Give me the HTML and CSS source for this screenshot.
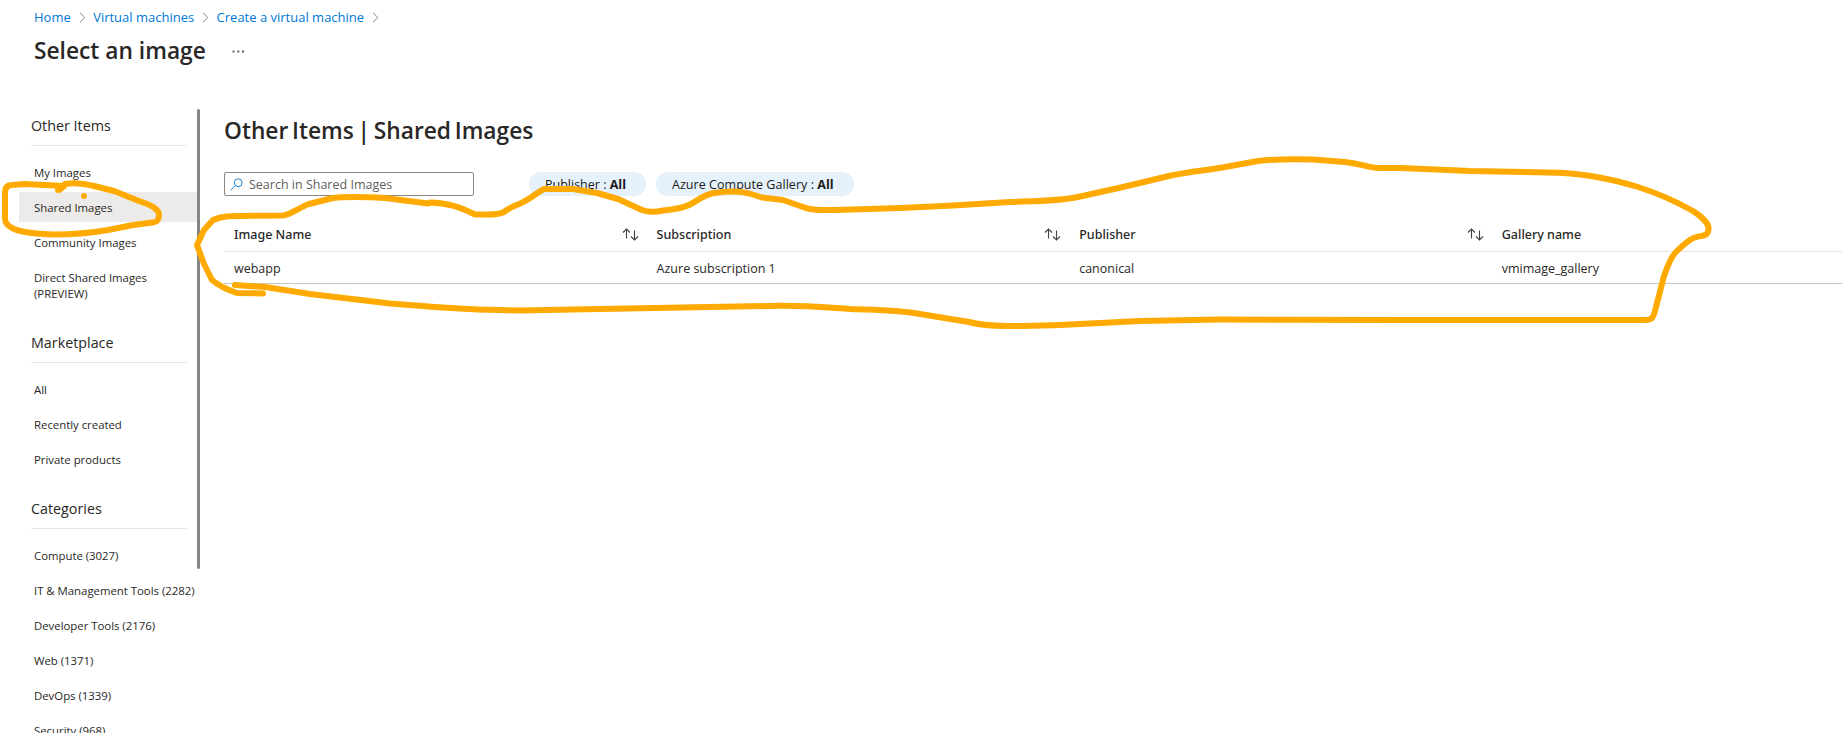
FILE: index.html
```html
<!DOCTYPE html>
<html lang="en">
<head>
<meta charset="utf-8">
<title>Select an image</title>
<link rel="stylesheet" href="styles.css">
</head>
<body>
<header class="top">
  <nav class="crumbs">
    <a class="crumb">Home</a>
    <svg class="chev" viewBox="0 0 7 11"><path d="M1 .8 5.8 5.5 1 10.2"/></svg>
    <a class="crumb">Virtual machines</a>
    <svg class="chev" viewBox="0 0 7 11"><path d="M1 .8 5.8 5.5 1 10.2"/></svg>
    <a class="crumb">Create a virtual machine</a>
    <svg class="chev" viewBox="0 0 7 11"><path d="M1 .8 5.8 5.5 1 10.2"/></svg>
  </nav>
  <div class="title-row">
    <h1 class="title">Select an image</h1>
    <svg class="more" viewBox="0 0 13 3"><path d="M.5 .5h2v2h-2zM5.3 .5h2v2h-2zM10 .5h2v2h-2z"/></svg>
  </div>
</header>
<div class="body">
  <aside class="side">
    <section class="group">
      <h2 class="group-title">Other Items</h2>
      <a class="item">My Images</a>
      <a class="item selected">Shared Images</a>
      <a class="item">Community Images</a>
      <a class="item">Direct Shared Images<br>(PREVIEW)</a>
    </section>
    <section class="group">
      <h2 class="group-title">Marketplace</h2>
      <a class="item">All</a>
      <a class="item">Recently created</a>
      <a class="item">Private products</a>
    </section>
    <section class="group">
      <h2 class="group-title">Categories</h2>
      <a class="item">Compute (3027)</a>
      <a class="item">IT &amp; Management Tools (2282)</a>
      <a class="item">Developer Tools (2176)</a>
      <a class="item">Web (1371)</a>
      <a class="item">DevOps (1339)</a>
      <a class="item">Security (968)</a>
    </section>
  </aside>
  <div class="scrollbar"></div>
  <main class="main">
    <h2 class="heading">Other Items | Shared Images</h2>
    <div class="filters">
      <div class="search">
        <svg class="search-icon" viewBox="0 0 13 13"><circle cx="8.2" cy="4.7" r="3.9"/><path d="M5.4 7.5.7 12.3"/></svg>
        <span class="placeholder">Search in Shared Images</span>
      </div>
      <div class="pill publisher"><span>Publisher : <b>All</b></span></div>
      <div class="pill gallery"><span>Azure Compute Gallery : <b>All</b></span></div>
    </div>
    <div class="table">
      <div class="row head">
        <div class="cell"><span>Image Name</span><svg class="sort" viewBox="0 0 17 13"><path d="M4.5 10.5V1M1 4.5 4.5 1 8 4.5M12.5 2.5V12M9 8.5l3.5 3.5L16 8.5"/></svg></div>
        <div class="cell"><span>Subscription</span><svg class="sort" viewBox="0 0 17 13"><path d="M4.5 10.5V1M1 4.5 4.5 1 8 4.5M12.5 2.5V12M9 8.5l3.5 3.5L16 8.5"/></svg></div>
        <div class="cell"><span>Publisher</span><svg class="sort" viewBox="0 0 17 13"><path d="M4.5 10.5V1M1 4.5 4.5 1 8 4.5M12.5 2.5V12M9 8.5l3.5 3.5L16 8.5"/></svg></div>
        <div class="cell"><span>Gallery name</span></div>
      </div>
      <div class="row data">
        <div class="cell">webapp</div>
        <div class="cell">Azure subscription 1</div>
        <div class="cell">canonical</div>
        <div class="cell">vmimage_gallery</div>
      </div>
    </div>
  </main>
</div>
<svg class="ink" viewBox="0 0 1842 733">
  <path d="M58 190 C61 190 63 187 65 184 C75 182 86 184 94 186 L114 191 L139 201 C151 205 159 209 159 215 C159 220 157 222 153 222.500 L133 225 L108 230 C90 233 75 234.500 55 234.500 C36 234 20 232 12 228 C7 225 5 223 5 218 L5 193 C5 188 7 185 12 185 L25 184 L64 186"/>
  <circle class="dot" cx="84" cy="196" r="3"/>
  <path d="M263 293.500 L237 293 C228 290 219 286 212 280 L204 264 L197 245 L204 230 L213 220 C222 216 230 216 240 216 L283 215.500 C292 214 300 207 309 204 L333 198 C350 196 368 197 385 198 L428 203.500 L430 202.500 C448 203 460 207 475 214.500 L488 214.500 C493 214.500 500 214 504 212 C508 208 518 205 525 201 C533 197 536 193 544 189 L573 189 L597 193 L618 199 L642 210 C650 213 657 212 663 210.500 C674 209 681 209 689 205 C697 201 703 195 714 193 C727 191 741 191 751 194 L762 197.500 L783 200 L803 207 C813 211 823 210 837 210 L900 208 L953 205.500 L1010 202 C1040 201 1060 201 1078 197 L1123 187 L1171 175.500 C1190 171.500 1210 170 1225 167 L1258 161 C1275 159 1294 159 1313 159.500 L1345 162 C1363 164 1370 168 1379 168 L1401 168 L1470 171 L1547 172.500 C1580 173 1605 177 1638 187 C1660 194 1677 202 1693 211 C1704 218 1709 225 1708.500 229 C1708 239 1697 234 1690 240 C1684 244 1680 248 1676 252 C1670 258 1667 268 1664 276 L1655 311 C1653 318 1652 320 1645 320 L1400 320 L1220 319.500 L1140 321 L1060 325 C1030 326 990 328 969 322 L920 314 C900 310 875 310 850 309 C820 307 800 305 770 306 L600 309 L520 310.500 C490 310 460 309 435 307 L390 303.500 L310 294 L265 287 L235 285"/>
</svg>
</body>
</html>
```
FILE: styles.css
```css
* { box-sizing: border-box; }
body {
  margin: 0;
  width: 1842px;
  height: 733px;
  overflow: hidden;
  position: relative;
  background: #fff;
  color: #292827;
  font-family: "Open Sans", "Noto Sans", sans-serif;
  font-size: 12.500px;
}
h1, h2 { margin: 0; }
.top { height: 109px; padding: 8px 0 0 34px; }
.crumbs { display: flex; align-items: center; height: 19px; }
.crumb { color: #0078d4; font-size: 13px; line-height: 18px; padding-bottom: 2px; white-space: nowrap; }
.chev { width: 7px; height: 11px; margin: 0 7.400px 0 8px; fill: none; stroke: #8a8886; stroke-width: 1; }
.title-row { display: flex; align-items: center; height: 34px; margin-top: 7px; }
.title { font-size: 22.750px; font-weight: 600; line-height: 32px; white-space: nowrap; }
.more { width: 13px; height: 3px; margin-left: 26px; fill: #605e5c; }
.body { display: flex; height: 624px; overflow: hidden; }
.side { width: 197px; flex: none; padding-top: 5px; }
.group + .group { margin-top: 23px; }
.group-title {
  height: 32px;
  margin: 0 10px 11px 31px;
  line-height: 24px;
  font-size: 14.300px;
  font-weight: 400;
  border-bottom: 1px solid #e6e6e6;
}
.item {
  display: block;
  margin: 0 0 5px 19px;
  padding: 8px 0 6px 15px;
  font-size: 11.400px;
  letter-spacing: -0.02px;
  line-height: 16px;
  white-space: nowrap;
}
.item:last-child { margin-bottom: 0; }
.selected { background: #edebe9; }
.scrollbar { width: 3px; height: 460px; flex: none; border-radius: 1.500px; background: #868686; }
.main { flex: 1; min-width: 0; padding: 5px 0 0 24px; }
.heading { font-size: 22.750px; font-weight: 600; line-height: 34px; word-spacing: -2.200px; white-space: nowrap; }
.filters { display: flex; margin-top: 24px; height: 24px; }
.search { display: flex; align-items: center; width: 250px; height: 24px; padding-left: 5px; border: 1px solid #8a8886; border-radius: 2px; }
.search-icon { width: 13px; height: 13px; fill: none; stroke: #1683d8; stroke-width: 1; }
.placeholder { margin-left: 6px; color: #605e5c; }
.pill { display: flex; align-items: center; height: 24px; padding-left: 16px; border-radius: 12px; background: #e5f1fb; color: #1b1a19; white-space: nowrap; }
.publisher { width: 117px; margin-left: 55px; }
.gallery { width: 198px; margin-left: 10px; letter-spacing: 0.04px; }
.table { margin-top: 21px; }
.row { display: grid; grid-template-columns: 422.600px 422.600px 422.600px 1fr; }
.cell { display: flex; align-items: center; justify-content: space-between; padding-left: 10px; }
.head { height: 35px; border-bottom: 1px solid #e6e6e6; font-family: "Noto Sans", sans-serif; font-weight: 500; }
.data { height: 32px; padding-top: 1px; border-bottom: 1px solid #c8c6c4; }
.sort { width: 17px; height: 13px; margin-right: 8px; fill: none; stroke: #444; stroke-width: 1.100; }
.ink { position: absolute; left: 0; top: 0; width: 1842px; height: 733px; fill: none; stroke: #fa0; stroke-width: 6; stroke-linecap: round; stroke-linejoin: round; pointer-events: none; }
.dot { fill: #fa0; stroke: none; }
```
